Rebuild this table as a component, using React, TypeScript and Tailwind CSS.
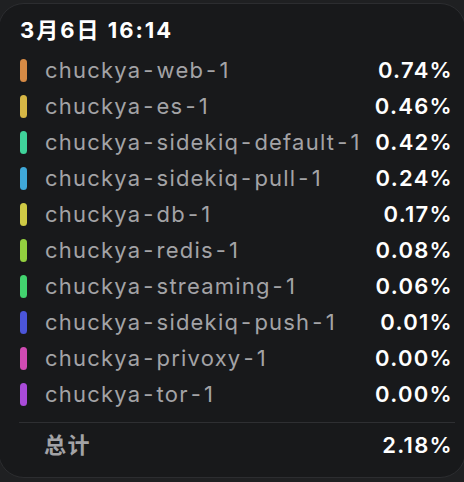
import React from 'react';

const rows = [
  { name: 'chuckya-web-1', value: '0.74%', color: 'bg-[#d68a45]' },
  { name: 'chuckya-es-1', value: '0.46%', color: 'bg-[#d6b645]' },
  { name: 'chuckya-sidekiq-default-1', value: '0.42%', color: 'bg-[#3fd39b]' },
  { name: 'chuckya-sidekiq-pull-1', value: '0.24%', color: 'bg-[#3fa8d9]' },
  { name: 'chuckya-db-1', value: '0.17%', color: 'bg-[#cfca45]' },
  { name: 'chuckya-redis-1', value: '0.08%', color: 'bg-[#93d03f]' },
  { name: 'chuckya-streaming-1', value: '0.06%', color: 'bg-[#42d36f]' },
  { name: 'chuckya-sidekiq-push-1', value: '0.01%', color: 'bg-[#4b55d9]' },
  { name: 'chuckya-privoxy-1', value: '0.00%', color: 'bg-[#d04bb3]' },
  { name: 'chuckya-tor-1', value: '0.00%', color: 'bg-[#a94bd9]' },
];

// hyphens sit with a bit of air around them in the original
const Name = ({ text }: { text: string }) => {
  const parts = text.split('-');
  return (
    <span className="ml-[18px] text-[22px] tracking-[1.2px] text-[#a3a3a6]">
      {parts.map((p, i) => (
        <React.Fragment key={i}>
          {i > 0 && <span className="mx-[2px]">-</span>}
          {p}
        </React.Fragment>
      ))}
    </span>
  );
};

const App = () => {
  return (
    <div
      className="w-[464px] h-[482px] overflow-hidden bg-[#1f2022]"
      style={{ fontFamily: 'Inter, "Noto Sans CJK SC", sans-serif' }}
    >
      <div className="mt-[3px] -ml-[2px] w-[468px] h-[475px] rounded-[26px] border border-[#2c2d30] bg-[#18191b] pl-[21px] pr-[12px] pt-[12px]">
        <h1 className="text-[22px] font-bold tracking-[2px] text-white leading-[28px]">3月6日 16:14</h1>

        <div className="mt-[8px]">
          {rows.map((row) => (
            <div key={row.name} className="flex items-center justify-between h-[36px]">
              <div className="flex items-center">
                <span className={`w-[7px] h-[23px] rounded-full ${row.color}`} />
                <Name text={row.name} />
              </div>
              <span className="text-[22px] font-semibold tracking-[1.3px] text-white">{row.value}</span>
            </div>
          ))}
        </div>

        {/* Total */}
        <div className="mt-[10px] -ml-[1px] mr-[-2px] border-t border-[#2e2f32]" />
        <div className="flex items-center justify-between h-[44px]">
          <span className="ml-[24px] text-[22px] font-semibold tracking-[1.5px] text-[#a3a3a6]">总计</span>
          <span className="text-[22px] font-semibold tracking-[1.3px] text-white">2.18%</span>
        </div>
      </div>
    </div>
  );
};

export default App;
